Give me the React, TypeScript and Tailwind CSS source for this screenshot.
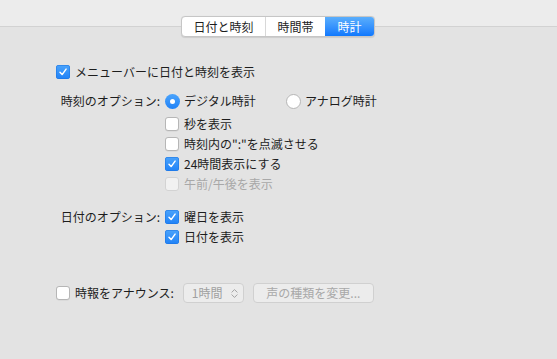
import type { ReactNode } from 'react';

const font = { fontFamily: '"Noto Sans CJK JP", "Noto Sans", sans-serif' };

function Check({ checked, disabled }: { checked?: boolean; disabled?: boolean }) {
  if (checked) {
    return (
      <span className="flex size-[14px] shrink-0 items-center justify-center rounded-[3px] bg-gradient-to-b from-[#4aa3fb] to-[#1f82f7] shadow-[inset_0_0_0_0.5px_#1a73e0]">
        <svg viewBox="0 0 14 14" className="size-[12px]">
          <path d="M3.5 7.4 L6 10 L10.6 3.6" fill="none" stroke="white" strokeWidth="1.7" strokeLinecap="round" strokeLinejoin="round" />
        </svg>
      </span>
    );
  }
  return (
    <span
      className={
        disabled
          ? 'size-[14px] shrink-0 rounded-[3px] border border-[#d3d3d3] bg-[#f1f1f1]'
          : 'size-[14px] shrink-0 rounded-[3px] border border-[#b6b6b6] bg-white shadow-[0_0.5px_0.5px_rgba(0,0,0,0.08)]'
      }
    />
  );
}

function CheckRow({ checked, disabled, children }: { checked?: boolean; disabled?: boolean; children: ReactNode }) {
  return (
    <div className="flex h-[20px] items-center gap-[5px]">
      <Check checked={checked} disabled={disabled} />
      <span className={disabled ? 'text-[#a8a8a8]' : 'text-[#1d1d1d]'}>{children}</span>
    </div>
  );
}

function Radio({ on }: { on?: boolean }) {
  if (on) {
    return (
      <span className="flex size-[15px] shrink-0 items-center justify-center rounded-full bg-gradient-to-b from-[#4aa3fb] to-[#1f82f7]">
        <span className="size-[5px] rounded-full bg-white" />
      </span>
    );
  }
  return <span className="size-[15px] shrink-0 rounded-full border border-[#b6b6b6] bg-white" />;
}

export default function App() {
  return (
    <div className="h-[359px] w-[557px] overflow-hidden bg-[#e3e3e3] text-[12px] leading-[20px]" style={font}>
      <div className="h-[27px] border-b border-[#d2d2d2] bg-[#ececec]" />

      <div className="-mt-[11px] flex justify-center pl-[-1px]">
        <div className="ml-[-1px] flex h-[21px] overflow-hidden rounded-[4px] border border-[#c6c6c6] bg-white shadow-[0_0.5px_1px_rgba(0,0,0,0.1)]">
          <div className="flex w-[84px] items-center justify-center border-r border-[#d8d8d8] text-[#1d1d1d]">日付と時刻</div>
          <div className="flex w-[59px] items-center justify-center text-[#1d1d1d]">時間帯</div>
          <div className="flex w-[49px] items-center justify-center bg-gradient-to-b from-[#5aaefc] to-[#0e78fd] text-white">時計</div>
        </div>
      </div>

      <div className="mt-[25px] pl-[56px]">
        <CheckRow checked>メニューバーに日付と時刻を表示</CheckRow>
      </div>

      <div className="mt-[9px] grid grid-cols-[110px_1fr] gap-x-[5px] pl-[50px]">
        <div className="h-[20px] text-right text-[#1d1d1d]">時刻のオプション:</div>
        <div className="flex h-[20px] items-center">
          <div className="flex w-[121px] items-center gap-[4px]">
            <Radio on />
            <span className="text-[#1d1d1d]">デジタル時計</span>
          </div>
          <div className="flex items-center gap-[4px]">
            <Radio />
            <span className="text-[#1d1d1d]">アナログ時計</span>
          </div>
        </div>
        <div />
        <div className="mt-[3px] flex flex-col">
          <CheckRow>秒を表示</CheckRow>
          <CheckRow>時刻内の":"を点滅させる</CheckRow>
          <CheckRow checked>24時間表示にする</CheckRow>
          <CheckRow disabled>午前/午後を表示</CheckRow>
        </div>

        <div className="mt-[13px] h-[20px] text-right text-[#1d1d1d]">日付のオプション:</div>
        <div className="mt-[13px] flex flex-col">
          <CheckRow checked>曜日を表示</CheckRow>
          <CheckRow checked>日付を表示</CheckRow>
        </div>
      </div>

      <div className="mt-[36px] flex items-center pl-[56px]">
        <CheckRow>時報をアナウンス:</CheckRow>
        <div className="ml-[9px] flex h-[20px] w-[61px] items-center justify-between rounded-[4px] border border-[#d0d0d0] bg-[#ececec] pl-[8px] pr-[5px] text-[#a0a0a0]">
          <span>1時間</span>
          <svg viewBox="0 0 8 12" className="h-[11px] w-[7px]">
            <path d="M1 4.5 L4 1.5 L7 4.5 M1 7.5 L4 10.5 L7 7.5" fill="none" stroke="#a0a0a0" strokeWidth="1.1" strokeLinecap="round" strokeLinejoin="round" />
          </svg>
        </div>
        <div className="ml-[9px] flex h-[20px] w-[121px] items-center justify-center rounded-[4px] border border-[#d0d0d0] bg-[#ececec] text-[#a8a8a8]">
          声の種類を変更...
        </div>
      </div>
    </div>
  );
}
